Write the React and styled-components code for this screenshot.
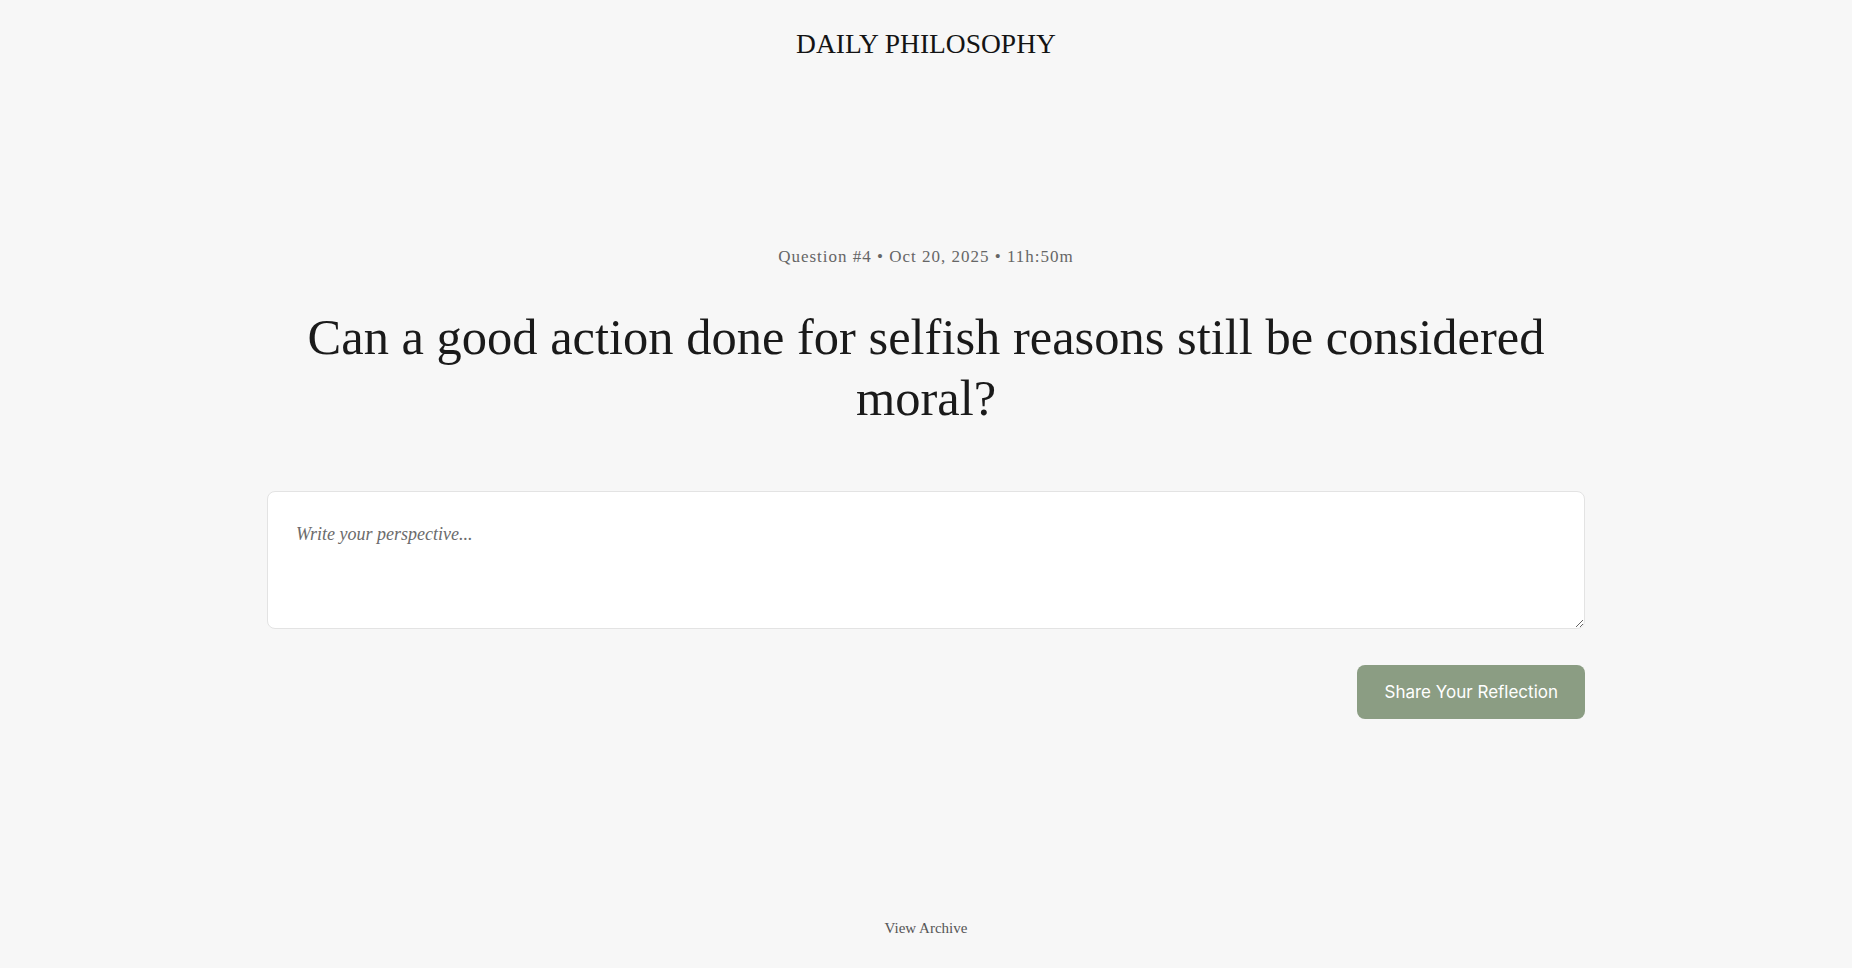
import React, { useState } from 'react';
import styled, { createGlobalStyle } from 'styled-components';

const GlobalStyle = createGlobalStyle`
  * {
    box-sizing: border-box;
  }

  html,
  body {
    margin: 0;
    padding: 0;
    background-color: #f7f7f7;
  }

  body {
    font-family: 'Liberation Serif', 'Times New Roman', serif;
    color: #1a1a1a;
  }
`;

const Page = styled.div`
  display: flex;
  flex-direction: column;
  min-height: 100vh;
`;

const Header = styled.header`
  display: flex;
  justify-content: center;
  padding-top: 28px;
`;

const Brand = styled.h1`
  margin: 0;
  font-family: 'Liberation Serif', serif;
  font-size: 27.5px;
  font-weight: 400;
  line-height: 32px;
  color: #141414;
`;

const Main = styled.main`
  display: flex;
  flex-direction: column;
  align-items: center;
  width: 100%;
  max-width: 1318px;
  margin: 0 auto;
  padding-top: 187px;
`;

const Meta = styled.div`
  font-family: 'Liberation Serif', serif;
  font-size: 17px;
  line-height: 20px;
  letter-spacing: 1px;
  color: #666666;
`;

const Question = styled.h2`
  margin: 40px 0 0;
  max-width: 1280px;
  font-family: 'Liberation Serif', serif;
  font-size: 50.5px;
  font-weight: 400;
  line-height: 61px;
  text-align: center;
  color: #1a1a1a;
`;

const Form = styled.form`
  display: flex;
  flex-direction: column;
  align-items: flex-end;
  width: 100%;
  margin-top: 62px;
`;

const Reflection = styled.textarea`
  display: block;
  width: 100%;
  height: 138px;
  padding: 30px 28px 28px;
  border: 1px solid #e3e3e3;
  border-radius: 8px;
  background-color: #ffffff;
  outline: none;
  resize: vertical;

  font-family: 'Liberation Serif', serif;
  font-size: 18px;
  line-height: 24px;
  color: #222222;

  &::placeholder {
    font-style: italic;
    color: #6b6b6b;
  }
`;

const SubmitButton = styled.button`
  height: 54px;
  margin-top: 36px;
  padding: 0 27px;
  border: 0;
  border-radius: 8px;
  background-color: #8b9d83;
  cursor: pointer;

  font-family: 'Inter', sans-serif;
  font-size: 17px;
  color: #ffffff;

  &:hover {
    opacity: 0.9;
  }
`;

const Footer = styled.footer`
  display: flex;
  justify-content: center;
  margin-top: auto;
  padding-bottom: 30px;
`;

const ArchiveLink = styled.a`
  font-family: 'Liberation Serif', serif;
  font-size: 15px;
  line-height: 20px;
  color: #555555;
  text-decoration: none;
  cursor: pointer;
`;

const App = () => {
  const [text, setText] = useState('');

  const handleSubmit = e => {
    e.preventDefault();
  };

  return (
    <Page>
      <GlobalStyle />
      <Header>
        <Brand>DAILY PHILOSOPHY</Brand>
      </Header>

      <Main>
        <Meta>Question #4 • Oct 20, 2025 • 11h:50m</Meta>
        <Question>
          Can a good action done for selfish reasons still be considered moral?
        </Question>

        <Form onSubmit={handleSubmit}>
          <Reflection
            placeholder="Write your perspective..."
            value={text}
            onChange={e => setText(e.target.value)}
          />
          <SubmitButton type="submit">Share Your Reflection</SubmitButton>
        </Form>
      </Main>

      <Footer>
        <ArchiveLink>View Archive</ArchiveLink>
      </Footer>
    </Page>
  );
};

export default App;
